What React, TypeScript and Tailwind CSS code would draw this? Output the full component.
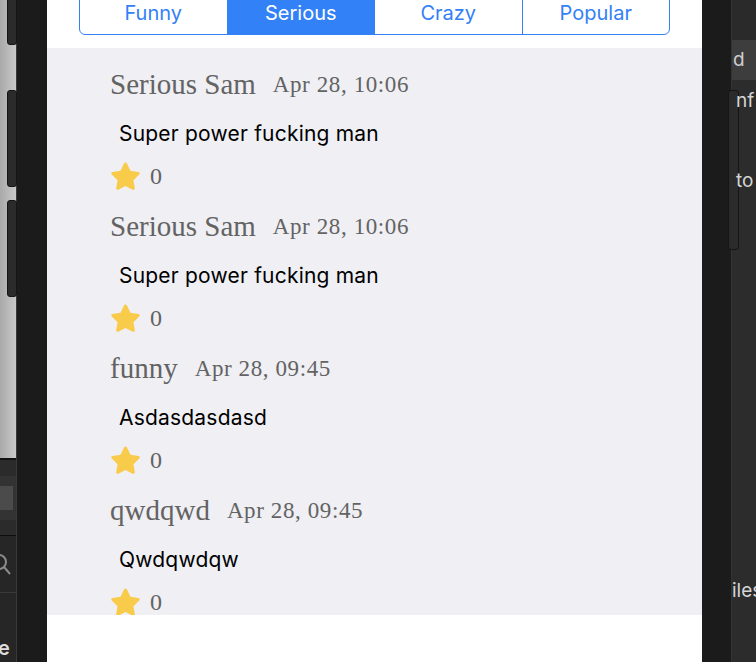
import React from "react";

type Post = {
  author: string;
  date: string;
  text: string;
  stars: number;
};

const posts: Post[] = [
  { author: "Serious Sam", date: "Apr 28, 10:06", text: "Super power fucking man", stars: 0 },
  { author: "Serious Sam", date: "Apr 28, 10:06", text: "Super power fucking man", stars: 0 },
  { author: "funny", date: "Apr 28, 09:45", text: "Asdasdasdasd", stars: 0 },
  { author: "qwdqwd", date: "Apr 28, 09:45", text: "Qwdqwdqw", stars: 0 },
];

const tabs = ["Funny", "Serious", "Crazy", "Popular"];

const serif = "font-['Liberation_Serif',Georgia,serif]";
const sans = "font-['Inter','Liberation_Sans',sans-serif]";

const Star = () => (
  <svg width="33" height="31" viewBox="0 0 24 23">
    <path
      d="M12 1.2c.5 0 .9.3 1.1.7l2.6 5.4 5.9.8c.9.1 1.3 1.3.6 1.9l-4.3 4.2 1 5.9c.2.9-.8 1.6-1.6 1.2L12 18.5l-5.3 2.8c-.8.4-1.8-.3-1.6-1.2l1-5.9-4.3-4.2c-.7-.6-.3-1.8.6-1.9l5.9-.8 2.6-5.4c.2-.4.6-.7 1.1-.7z"
      fill="#f9cb4b"
    />
  </svg>
);

const PostRow: React.FC<{ post: Post }> = ({ post }) => (
  <div className="h-[142px] shrink-0 flex flex-col">
    <div className="h-[44px] flex items-center pl-[63px] gap-[17px] text-[#636363]">
      <span className={`${serif} text-[29px]`}>{post.author}</span>
      <span className={`${serif} text-[23px] tracking-[0.6px]`}>{post.date}</span>
    </div>
    <div className={`h-[54px] flex items-center pl-[72px] ${sans} text-[21px] tracking-[0.2px] text-black`}>
      {post.text}
    </div>
    <div className="h-[30px] flex items-center pl-[62px] gap-[8px]">
      <Star />
      <span className={`${serif} text-[24px] text-[#636363] leading-none`}>{post.stars}</span>
    </div>
  </div>
);

const App: React.FC = () => {
  return (
    <div className="relative w-[756px] h-[662px] overflow-hidden flex bg-[#1b1b1b]">
      {/* left edge: desktop + xcode sidebar */}
      <div className="w-[17px] h-full flex flex-col border-r border-[#3a3a3a]">
        <div className="h-[458px] bg-gradient-to-r from-[#a9a9a9] to-[#c9c9c9]" />
        <div className="h-[2px] bg-[#111]" />
        <div className="h-[16px] bg-[#2b2b2b]" />
        <div className="h-[44px] bg-[#333] flex items-center">
          <div className="w-[13px] h-[24px] bg-[#4b4b4b]" />
        </div>
        <div className="h-[15px] bg-[#2b2b2b]" />
        <div className="h-[1px] bg-[#0d0d0d]" />
        <div className="h-[56px] bg-[#262626] flex items-center">
          <svg width="12" height="26" viewBox="0 0 12 26">
            <circle cx="-1" cy="11" r="7" stroke="#8a8a8a" strokeWidth="2" fill="none" />
            <path d="M4 16l6 7" stroke="#8a8a8a" strokeWidth="2" />
          </svg>
        </div>
        <div className="h-[1px] bg-[#3a3a3a]" />
        <div className="flex-1 bg-[#262626] flex items-end overflow-hidden">
          <span className={`${sans} text-[20px] font-semibold text-[#ddd] leading-none -ml-[2px] mb-[4px]`}>e</span>
        </div>
      </div>

      {/* left bezel */}
      <div className="w-[30px] h-full bg-[#1b1b1b]" />

      {/* phone screen */}
      <div className="w-[655px] h-full bg-white flex flex-col">
        <div className="h-[48px] shrink-0 px-[32px]">
          <div className="-mt-[10px] h-[45px] flex border border-[#3381f6] rounded-b-[6px] overflow-hidden">
            {tabs.map((t, i) => (
              <div
                key={t}
                className={`flex-1 flex items-center justify-center ${sans} text-[20px] ${
                  i > 0 ? "border-l border-[#3381f6]" : ""
                } ${t === "Serious" ? "bg-[#3381f6] text-white" : "text-[#3381f6]"}`}
              >
                {t}
              </div>
            ))}
          </div>
        </div>
        <div className="h-[567px] shrink-0 bg-[#efeff4] overflow-hidden flex flex-col pt-[15px]">
          {posts.map((p, i) => (
            <PostRow key={i} post={p} />
          ))}
        </div>
        <div className="flex-1 bg-white" />
      </div>

      {/* right bezel */}
      <div className="w-[30px] h-full bg-[#1b1b1b] border-r border-[#333]" />

      {/* right xcode panel */}
      <div className={`flex-1 h-full bg-[#2c2c2c] flex flex-col ${sans} text-[19px] text-[#d6d6d6] overflow-hidden`}>
        <div className="h-[40px] bg-[#2a2a2a]" />
        <div className="h-[40px] bg-[#3d3d3d] flex items-center pl-[1px] text-[#cfcfcf]">
          <span className="relative z-20">d</span>
        </div>
        <div className="h-[40px] flex items-center leading-none whitespace-nowrap pl-[4px]">
          <span className="relative z-20">nf</span>
        </div>
        <div className="h-[120px] flex items-center leading-none whitespace-nowrap pl-[4px]">
          <span className="relative z-20">to</span>
        </div>
        <div className="h-[362px] flex items-end leading-none whitespace-nowrap pb-[2px]">
          <span className="relative z-20">iles</span>
        </div>
      </div>

      {/* phone side buttons */}
      <div className="absolute z-10 left-[7px] top-[-6px] w-[10px] h-[51px] rounded-[3px] bg-[#2b2b2b] border border-[#151515]" />
      <div className="absolute z-10 left-[7px] top-[90px] w-[10px] h-[97px] rounded-[3px] bg-[#2b2b2b] border border-[#151515]" />
      <div className="absolute z-10 left-[7px] top-[200px] w-[10px] h-[97px] rounded-[3px] bg-[#2b2b2b] border border-[#151515]" />
      <div className="absolute z-10 left-[728px] top-[90px] w-[11px] h-[160px] rounded-[3px] bg-[#2b2b2b] border border-[#151515]" />
    </div>
  );
};

export default App;
